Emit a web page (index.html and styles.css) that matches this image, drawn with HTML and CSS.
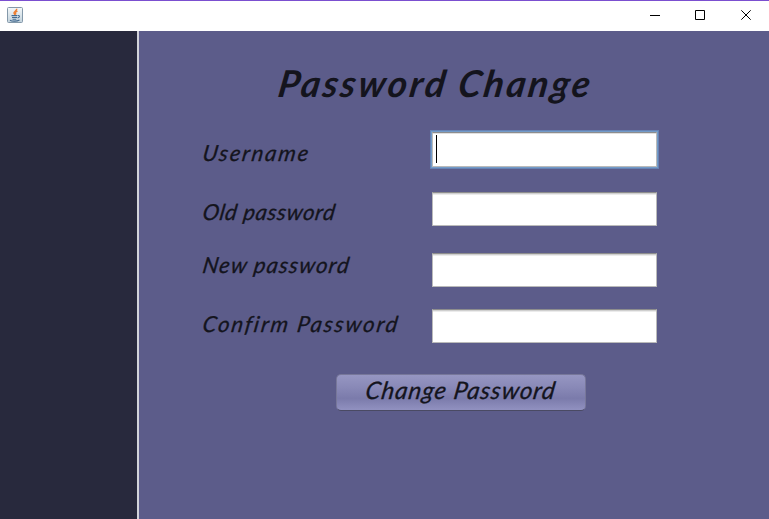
FILE: index.html
```
<!DOCTYPE html>
<html lang="en">
<head>
<meta charset="utf-8">
<title>Password Change</title>
<link rel="stylesheet" href="styles.css">
</head>
<body>
<div class="window">
  <header class="titlebar">
    <svg class="java" width="16" height="16" viewBox="0 0 16 16">
      <defs><linearGradient id="tile" x2="0" y2="1"><stop stop-color="#f4f8fa"/><stop offset="1" stop-color="#c2d2dc"/></linearGradient></defs>
      <rect x=".5" y=".5" width="15" height="15" rx="1" fill="url(#tile)" stroke="#8499aa"/>
      <path d="M9.800 1.800C10 4 6.200 4.500 7 6.200L8 8M10.500 4.200C8 5 8 6 9 7.500" fill="none" stroke="#ed8034" stroke-width="1.4"/>
      <path d="M4.500 8.600H10M5 10.500H10M5.500 12.200H9.300M10.500 8.500C13.400 8 12.800 10.500 10.500 11M3 13.200C5 14.500 10 14.500 12.500 13" fill="none" stroke="#446b91" stroke-width="1.1"/>
    </svg>
    <div class="controls">
      <svg width="46" height="30" viewBox="0 0 46 30"><path d="M19 14.500h10"/></svg>
      <svg width="46" height="30" viewBox="0 0 46 30"><path d="M18.500 9.500h9v9h-9z"/></svg>
      <svg width="46" height="30" viewBox="0 0 46 30"><path d="M18.300 9.300l9.400 9.400M27.700 9.300l-9.400 9.400"/></svg>
    </div>
  </header>
  <div class="body">
    <aside class="sidebar"></aside>
    <main class="panel">
      <h1><span>Password Change</span></h1>
      <form class="form">
        <label class="user"><span>Username</span></label><div class="field focused"><i class="caret"></i></div>
        <label class="old"><span>Old password</span></label><div class="field"></div>
        <label class="new"><span>New password</span></label><div class="field"></div>
        <label class="confirm"><span>Confirm Password</span></label><div class="field"></div>
      </form>
      <button type="button"><span>Change Password</span></button>
    </main>
  </div>
</div>
</body>
</html>
```
FILE: styles.css
```
* { box-sizing: border-box; }
body { margin: 0; font-family: Lato, sans-serif; color: #14141d; }
.window { width: 769px; height: 519px; display: flex; flex-direction: column; overflow: hidden; }
.titlebar { height: 31px; border-top: 1px solid #7b4fd0; background: #fff; display: flex; justify-content: space-between; padding-left: 7px; }
.java { margin-top: 6px; }
.controls { display: flex; }
.controls svg { fill: none; stroke: #000; }
.body { flex: 1; display: flex; }
.sidebar { width: 139px; background: #28293d; border-right: 2px solid #d2d3da; }
.panel { flex: 1; background: #5c5c8a; }
.panel span { display: inline-block; transform: skewX(-9deg); }
h1 { margin: 28px 0 0 140px; height: 73px; font-size: 37px; line-height: 48px; font-style: italic; font-weight: 700; letter-spacing: 2.6px; white-space: nowrap; }
.form { display: grid; grid-template-columns: 229px 225px; grid-template-rows: 60px 61px 56px 65px; margin-left: 64px; }
.form label { font-size: 22px; line-height: 26px; font-style: italic; white-space: nowrap; -webkit-text-stroke: .3px #14141d; }
.user { padding-top: 8px; letter-spacing: 1.9px; }
.old { padding-top: 7px; letter-spacing: .7px; }
.new { margin-top: -1px; letter-spacing: 1.2px; }
.confirm { padding-top: 2px; letter-spacing: 2px; }
.field { height: 34px; background: #fff; border: 1px solid #bababa; border-top-color: #8d8d8d; box-shadow: inset 0 1px #cfcfcf, inset 0 2px #ebebeb; }
.focused { height: 35px; box-shadow: inset 0 1px #e0e0e0, 0 0 0 1px #739bc9, 0 0 0 2px #6682b3; }
.caret { display: block; width: 1px; height: 28px; margin: 2px 0 0 3px; background: #000; }
button { display: block; width: 250px; height: 37px; margin-left: 197px; padding: 0 0 6px; border: 1px solid #77779a; border-bottom-color: #4a4a63; border-radius: 5px; background: linear-gradient(#9696c2, #8989b7 35%, #7b7bab 67%, #9191c0); font: italic 24px/28px Lato, sans-serif; color: #14141d; letter-spacing: 1px; white-space: nowrap; -webkit-text-stroke: .3px #14141d; }
```
